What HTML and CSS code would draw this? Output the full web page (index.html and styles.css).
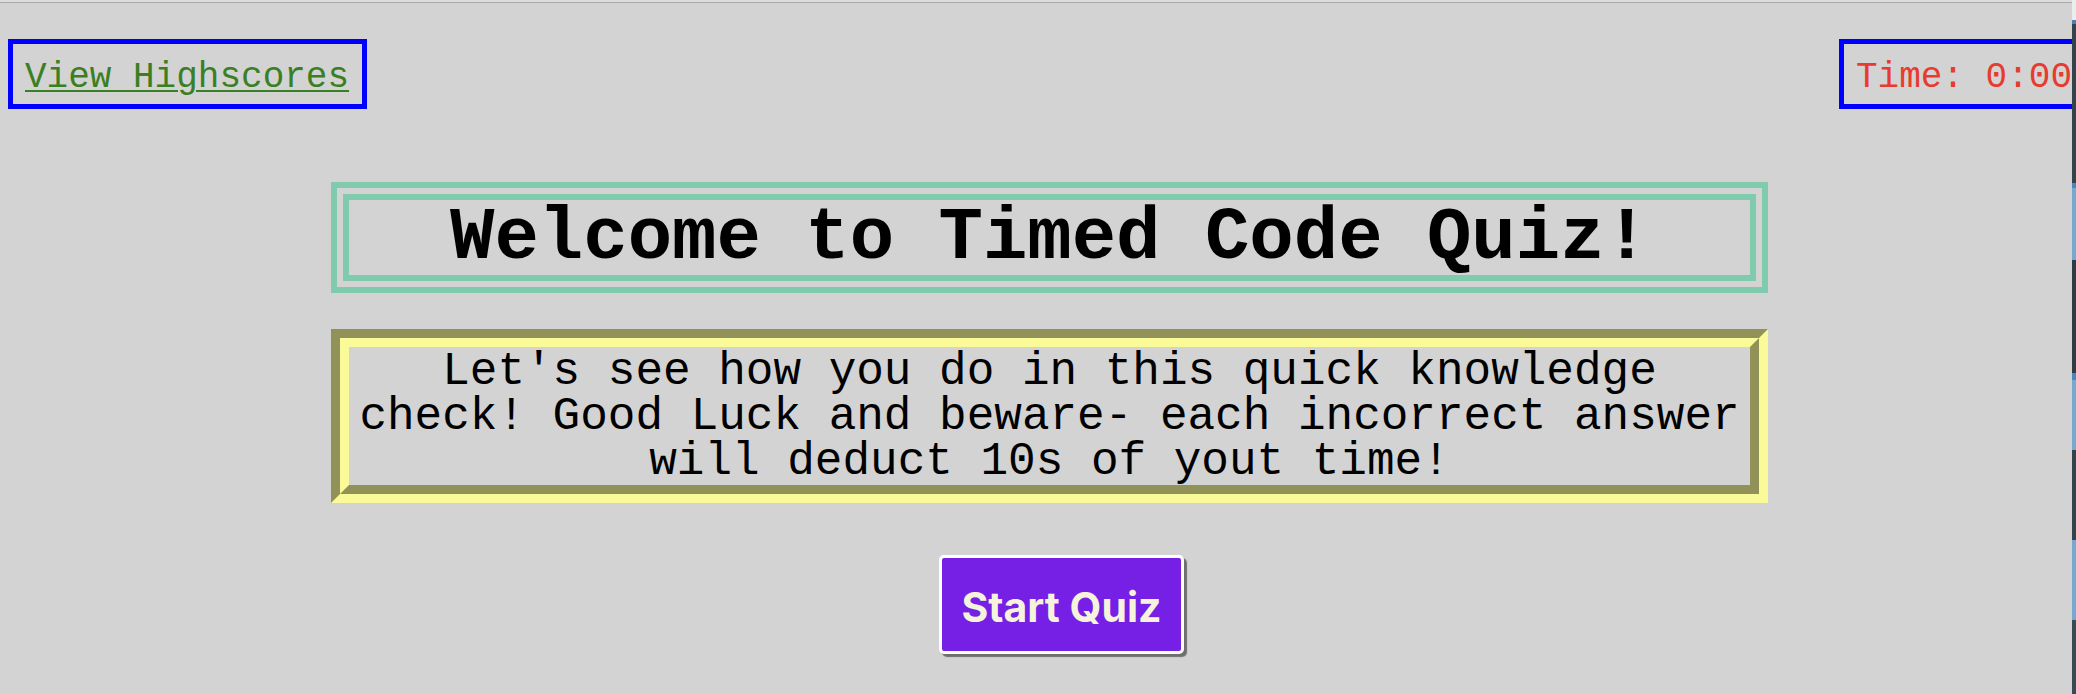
FILE: index.html
```html
<!DOCTYPE html>
<html lang="en">
<head>
<meta charset="utf-8">
<title>Timed Code Quiz</title>
<link rel="stylesheet" href="styles.css">
</head>
<body>
  <div class="viewport">
    <div class="topline"></div>
    <div class="page">
      <header class="topbar">
        <div class="navbox"><a class="highscores" href="#">View Highscores</a></div>
        <div class="navbox timer">Time: 0:00</div>
      </header>
      <main class="content">
        <h1 class="title">Welcome to Timed Code Quiz!</h1>
        <div class="intro-frame">
          <p class="intro">Let's see how you do in this quick knowledge check! Good Luck and beware- each incorrect answer will deduct 10s of yout time!</p>
        </div>
        <div class="actions">
          <button class="start" type="button">Start Quiz</button>
        </div>
      </main>
    </div>
  </div>
  <div class="desktop-strip"></div>
</body>
</html>
```
FILE: styles.css
```css
html, body {
  margin: 0;
  padding: 0;
}
body {
  display: flex;
  width: 2076px;
  height: 694px;
  overflow: hidden;
  background: #d3d3d3;
}
.viewport {
  width: 2072px;
  height: 694px;
  overflow: hidden;
  background: #d3d3d3;
  flex: none;
}
.topline {
  height: 2px;
  background: #dcdcdc;
  border-bottom: 1px solid #a9a9a9;
}
.page {
  padding-left: 8px;
}
.topbar {
  display: flex;
  justify-content: space-between;
  width: 2082px;
  margin-top: 36px;
}
.navbox {
  border: 5px solid #0000ff;
  padding: 14px 13px 6px 12px;
  font-family: "Liberation Mono", "Courier New", monospace;
  font-size: 36px;
  line-height: 40px;
  white-space: nowrap;
}
.highscores {
  color: #3b7f24;
  text-decoration: underline;
  text-decoration-thickness: 2px;
  text-underline-offset: 3px;
}
.timer {
  color: #e63b2e;
}
.content {
  margin-left: 323px;
  width: 1437px;
}
.title {
  margin: 73px 0 0;
  border: 18px double #80cbad;
  padding: 2px 0 0;
  font-family: "Liberation Mono", "Courier New", monospace;
  font-weight: 700;
  font-size: 74px;
  line-height: 73px;
  text-align: center;
  color: #000;
}
.intro-frame {
  margin-top: 36px;
  border: 9px solid;
  border-color: #919257 #fafa98 #fafa98 #919257;
}
.intro {
  margin: 0;
  padding: 3px 0 0;
  border: 9px solid;
  border-color: #fafa98 #919257 #919257 #fafa98;
  font-family: "Liberation Mono", "Courier New", monospace;
  font-size: 46px;
  line-height: 45px;
  text-align: center;
  color: #000;
}
.actions {
  display: flex;
  justify-content: center;
  padding-left: 24px;
  margin-top: 52px;
}
.start {
  width: 245px;
  height: 99px;
  box-sizing: border-box;
  border: 3px solid #ffffff;
  border-radius: 5px;
  background: #7620e6;
  color: #f5f3dc;
  font-family: Inter, "Noto Sans", sans-serif;
  font-weight: 700;
  font-size: 41px;
  padding: 5px 0 0;
  box-shadow: 3px 3px 1px #6e6e6e;
}
.desktop-strip {
  width: 4px;
  height: 694px;
  flex: none;
  background: linear-gradient(to bottom,
    #e9edf0 0, #e9edf0 20px,
    #4f7fb0 20px, #4f7fb0 24px,
    #34424a 24px, #34424a 183px,
    #4a86c0 183px, #4a86c0 188px,
    #78a8cf 188px, #78a8cf 260px,
    #2f3c44 260px, #2f3c44 373px,
    #4a86c0 373px, #4a86c0 380px,
    #78a8cf 380px, #78a8cf 450px,
    #33434b 450px, #33434b 540px,
    #78a8cf 540px, #78a8cf 620px,
    #3a4a52 620px, #3a4a52 694px);
}
```
